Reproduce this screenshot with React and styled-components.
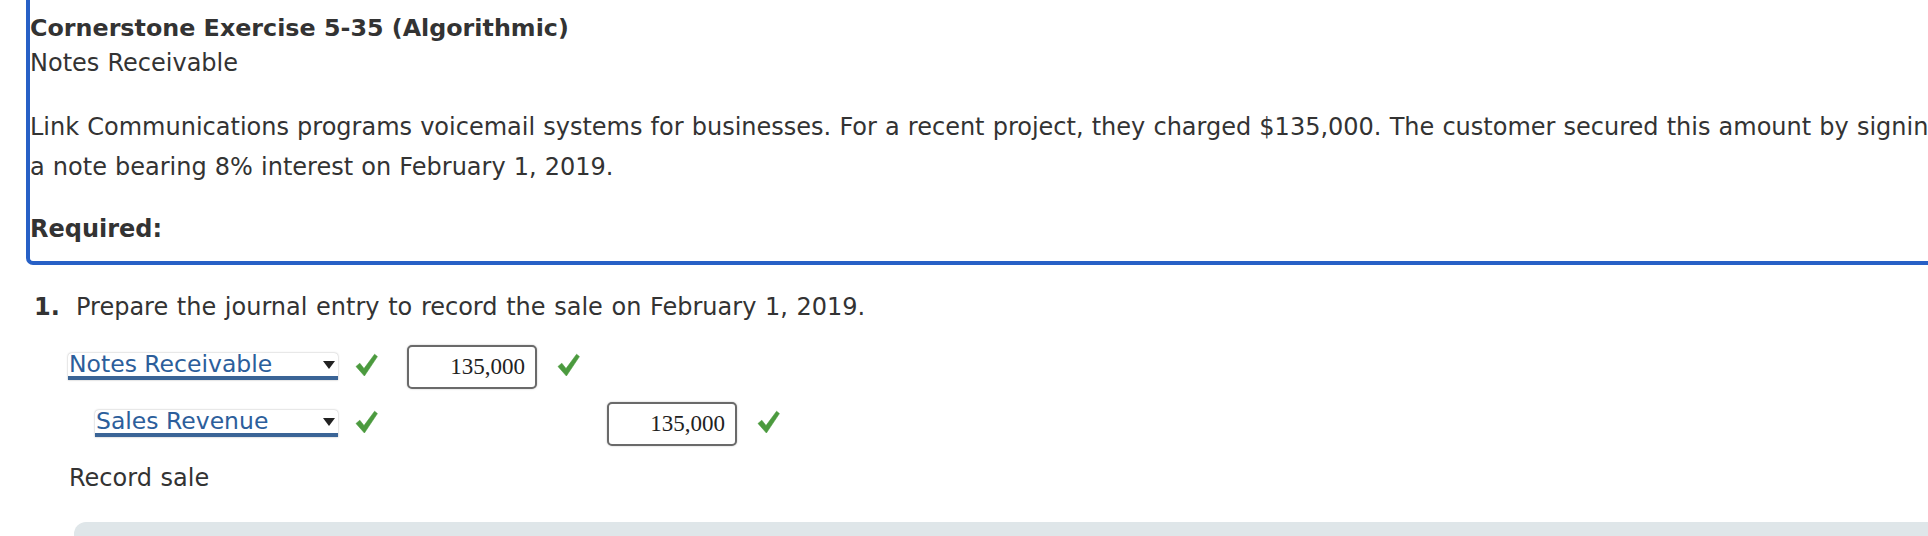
import React from "react";
import styled, { createGlobalStyle } from "styled-components";

const GlobalStyle = createGlobalStyle`
  html, body {
    margin: 0;
    padding: 0;
    background: #ffffff;
    overflow: hidden;
  }
  body {
    font-family: "DejaVu Sans", Verdana, sans-serif;
    color: #333333;
    font-size: 24px;
    word-spacing: 0.5px;
  }
  #root {
    width: 1928px;
    height: 536px;
    overflow: hidden;
  }
`;

const Page = styled.div`
  width: 1928px;
  height: 536px;
  overflow: hidden;
`;

const IntroBox = styled.section`
  margin-left: 26px;
  border: 4px solid #2760c6;
  border-top: 0;
  border-right: 0;
  border-bottom-left-radius: 7px;
  padding: 12px 0 15px 0;
  white-space: nowrap;
  overflow: hidden;
  line-height: 33px;
`;

const Title = styled.h1`
  margin: 0;
  font-size: 23.8px;
  word-spacing: 0;
  font-weight: bold;
  line-height: 33px;
  color: #333333;
`;

const Subtitle = styled.div`
  margin-top: 2px;
`;

const Paragraph = styled.p`
  margin: 27px 0 0 0;
  line-height: 40px;
`;

const Required = styled.div`
  margin-top: 26px;
  font-weight: bold;
`;

const Question = styled.section`
  padding-top: 26px;
  word-spacing: 1px;
`;

const QuestionLine = styled.div`
  padding-left: 34px;
  line-height: 33px;
  white-space: nowrap;
`;

const Num = styled.span`
  display: inline-block;
  width: 42px;
  font-weight: bold;
`;

const Journal = styled.div`
  margin-top: 21px;
  padding-left: 68px;
  display: flex;
  flex-direction: column;
  gap: 13px;
`;

const Row = styled.div`
  display: grid;
  grid-template-columns: 270px 69px 130px 70px 130px 50px;
  align-items: center;
  height: 44px;
`;

const Select = styled.div`
  position: relative;
  justify-self: end;
  width: ${(p) => (p.$indent ? 243 : 270)}px;
  height: 27px;
  box-sizing: border-box;
  background: #ffffff;
  border-radius: 4px 4px 0 0;
  box-shadow: 0 0 2px rgba(0, 0, 0, 0.35);
  border-bottom: 4px solid #3a6496;
  color: #2c5e9b;
  font-size: 23.5px;
  word-spacing: 0;
  line-height: 23px;
  padding-left: 1px;
  white-space: nowrap;
  margin-top: -1px;
`;

const Arrow = styled.span`
  position: absolute;
  right: 3px;
  top: 8px;
  width: 0;
  height: 0;
  border-left: 6px solid transparent;
  border-right: 6px solid transparent;
  border-top: 8px solid #222222;
`;

const CheckWrap = styled.span`
  display: block;
  margin-left: ${(p) => p.$offset}px;
  width: 23px;
  height: 24px;
  margin-top: -4px;
`;

const AmountBox = styled.div`
  grid-column: ${(p) => p.$col};
  box-sizing: border-box;
  width: 130px;
  height: 44px;
  border: 2px solid #6a6a6a;
  border-radius: 5px;
  box-shadow: 0 0 2px rgba(0, 0, 0, 0.25);
  background: #ffffff;
  font-family: "Liberation Serif", "Times New Roman", serif;
  font-size: 23px;
  word-spacing: 0;
  line-height: 40px;
  text-align: right;
  padding-right: 10px;
  color: #222222;
`;

const Memo = styled.div`
  margin-top: 16px;
  padding-left: 69px;
  line-height: 33px;
`;

const GrayPanel = styled.div`
  margin-top: 27px;
  margin-left: 74px;
  height: 40px;
  background: #dfe6e9;
  border-top-left-radius: 12px;
`;

function Check({ offset, col }) {
  return (
    <CheckWrap $offset={offset} style={col ? { gridColumn: col } : undefined}>
      <svg width="23" height="24" viewBox="0 0 23 24">
        <path
          d="M1 13.5 L4.8 10.2 L9 15.6 L19.6 1.2 L22.4 3.6 L9.4 23 Z"
          fill="#4b9a3e"
          stroke="#4b9a3e"
          strokeWidth="0.6"
          strokeLinejoin="round"
        />
      </svg>
    </CheckWrap>
  );
}

export default function App() {
  return (
    <>
      <GlobalStyle />
      <Page>
        <IntroBox>
          <Title>Cornerstone Exercise 5-35 (Algorithmic)</Title>
          <Subtitle>Notes Receivable</Subtitle>
          <Paragraph>
            Link Communications programs voicemail systems for businesses. For a recent project, they charged $135,000. The customer secured this amount by signing
            <br />
            a note bearing 8% interest on February 1, 2019.
          </Paragraph>
          <Required>Required:</Required>
        </IntroBox>
        <Question>
          <QuestionLine>
            <Num>1.</Num>Prepare the journal entry to record the sale on February 1, 2019.
          </QuestionLine>
          <Journal>
            <Row>
              <Select>
                Notes Receivable
                <Arrow />
              </Select>
              <Check offset={17} />
              <AmountBox $col={3}>135,000</AmountBox>
              <Check offset={20} />
            </Row>
            <Row>
              <Select $indent>
                Sales Revenue
                <Arrow />
              </Select>
              <Check offset={17} />
              <AmountBox $col={5}>135,000</AmountBox>
              <Check offset={20} col={6} />
            </Row>
          </Journal>
          <Memo>Record sale</Memo>
          <GrayPanel />
        </Question>
      </Page>
    </>
  );
}
